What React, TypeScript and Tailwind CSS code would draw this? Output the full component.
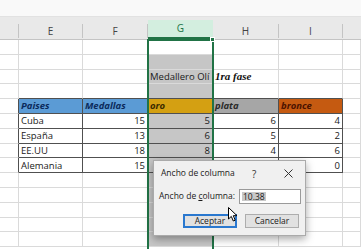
import React from "react";

type Cell = {
  t?: string;
  cls?: string;
  align?: "l" | "r";
};

const colW = ["w-[19px]", "w-[64px]", "w-[65px]", "w-[65px]", "w-[66px]", "w-[64px]", "w-[18px]"];
const letters = ["", "E", "F", "G", "H", "I", ""];

const grid = "border-r border-b border-[#dadada]";
const tb = "border-r border-b border-[#505050]";

function buildRows(): Cell[][] {
  const rows: Cell[][] = [];
  for (let r = 0; r < 14; r++) {
    const row: Cell[] = [];
    for (let c = 0; c < 7; c++) {
      const gSel = c === 3 && r > 0;
      row.push({ cls: `${grid} ${gSel ? "bg-[#c6c6c6]" : "bg-white"}` });
    }
    rows.push(row);
  }
  rows[2][3] = { t: "Medallero Olí", cls: `${grid} bg-[#c6c6c6]`, align: "l" };
  rows[2][4] = {
    t: "1ra fase",
    cls: `${grid} bg-white font-['Liberation_Serif',serif] font-bold italic text-[11px] text-[#111]`,
    align: "l",
  };
  for (let c = 1; c <= 5; c++) {
    rows[3][c] = {
      cls: `border-r border-b border-[#dadada] ${c === 3 ? "bg-[#c6c6c6]" : "bg-white"} !border-b-[#505050]`,
    };
  }
  const hdr = "font-bold italic";
  rows[4][0] = { cls: `border-b border-r border-[#dadada] !border-r-[#505050] bg-white` };
  rows[4][1] = { t: "Paises", cls: `${tb} bg-[#5b9bd5] text-[#0b2a5b] ${hdr}`, align: "l" };
  rows[4][2] = { t: "Medallas", cls: `${tb} bg-[#5b9bd5] text-[#0b2a5b] ${hdr}`, align: "l" };
  rows[4][3] = { t: "oro", cls: `${tb} bg-[#d4a012] text-[#3a2a00] ${hdr}`, align: "l" };
  rows[4][4] = { t: "plata", cls: `${tb} bg-[#a6a6a6] text-[#2a2a2a] ${hdr}`, align: "l" };
  rows[4][5] = { t: "bronce", cls: `${tb} bg-[#c55a11] text-[#4a1200] ${hdr}`, align: "l" };
  const data = [
    ["Cuba", "15", "5", "6", "4"],
    ["España", "13", "6", "5", "2"],
    ["EE.UU", "18", "8", "4", "6"],
    ["Alemania", "15", "", "", "0"],
  ];
  data.forEach((d, i) => {
    const r = 5 + i;
    rows[r][0] = { cls: `border-b border-r border-[#dadada] !border-r-[#505050] bg-white` };
    rows[r][1] = { t: d[0], cls: `${tb} bg-white`, align: "l" };
    rows[r][2] = { t: d[1], cls: `${tb} bg-white`, align: "r" };
    rows[r][3] = { t: d[2], cls: `${tb} bg-[#c6c6c6]`, align: "r" };
    rows[r][4] = { t: d[3], cls: `${tb} bg-white`, align: "r" };
    rows[r][5] = { t: d[4], cls: `${tb} bg-white`, align: "r" };
  });
  return rows;
}

export default function App() {
  const rows = buildRows();
  return (
    <div className="relative w-[361px] h-[249px] overflow-hidden bg-white font-['Open_Sans',sans-serif] text-[9.5px] text-[#1a1a1a]">
      <div className="h-[17px] bg-[#f9f9f9] border-b border-[#e2e2e2]" />
      <div className="flex h-[23px] bg-[#e9e9e9] border-b border-[#c4c4c4] items-end">
        {letters.map((l, i) =>
          i === 3 ? (
            <div
              key={i}
              className={`${colW[i]} h-[19px] shrink-0 bg-[#d3eedf] border-b-2 border-[#217346] flex items-center justify-center text-[#217346] text-[10px] pb-[1px]`}
            >
              {l}
            </div>
          ) : (
            <div
              key={i}
              className={`${colW[i]} h-[14px] shrink-0 ${i === 6 ? "" : "border-r border-[#c4c4c4]"} flex items-center justify-center text-[#444] text-[10px] mb-[1px]`}
            >
              {l}
            </div>
          )
        )}
      </div>
      <div className="flex flex-col">
        {rows.map((row, r) => (
          <div key={r} className="flex h-[14.8px]">
            {row.map((c, ci) => (
              <div
                key={ci}
                className={`${colW[ci]} shrink-0 h-full overflow-hidden whitespace-nowrap flex items-center leading-none ${c.cls} ${
                  c.align === "r" ? "justify-end pr-[2px]" : "justify-start pl-[2px]"
                }`}
              >
                {c.t}
              </div>
            ))}
          </div>
        ))}
      </div>

      <div className="absolute left-[147px] top-[39px] w-[67px] h-[220px] border-2 border-[#217346]" />
      <div className="absolute left-[210px] top-[37px] w-[5px] h-[5px] bg-[#217346] border border-white" />

      <div className="absolute left-[153px] top-[160px] w-[153px] h-[76px] bg-[#f0f0f0] border border-[#aaaaaa] shadow-[0_3px_8px_rgba(0,0,0,0.35)] flex flex-col text-[8.5px] text-[#1a1a1a]">
        <div className="h-[25px] flex items-center pl-[7px] relative">
          <span>Ancho de columna</span>
          <span className="absolute left-[98px] top-[6px] text-[10px] text-[#333]">?</span>
          <svg className="absolute left-[130px] top-[8px]" width="9" height="9" viewBox="0 0 9 9">
            <path d="M0.5 0.5 L8.5 8.5 M8.5 0.5 L0.5 8.5" stroke="#333" strokeWidth="1" />
          </svg>
        </div>
        <div className="mt-[3px] h-[15px] flex items-center pl-[5px]">
          <span className="w-[80px]">
            Ancho de <span className="underline">c</span>olumna:
          </span>
          <div className="w-[62px] h-[15px] bg-white border border-[#9a9a9a] flex items-center pl-[2px]">
            <span className="bg-[#c8c8c8] px-[1px] leading-[9px]">10.38</span>
          </div>
        </div>
        <div className="mt-[10px] h-[14px] flex items-center pl-[29px] gap-[8px]">
          <div className="w-[54px] h-[14px] bg-[#e1e1e1] border-2 border-[#2a78cf] flex items-center justify-center">
            Aceptar
          </div>
          <div className="w-[54px] h-[14px] bg-[#e1e1e1] border border-[#adadad] flex items-center justify-center">
            Cancelar
          </div>
        </div>
      </div>

      <svg className="absolute left-[228px] top-[207px]" width="11" height="16" viewBox="0 0 11 16">
        <path
          d="M0.5 0.5 L0.5 12 L3.3 9.4 L5.3 14 L7.2 13.2 L5.3 8.7 L9 8.7 Z"
          fill="white"
          stroke="black"
          strokeWidth="1"
          strokeLinejoin="round"
        />
      </svg>
    </div>
  );
}
